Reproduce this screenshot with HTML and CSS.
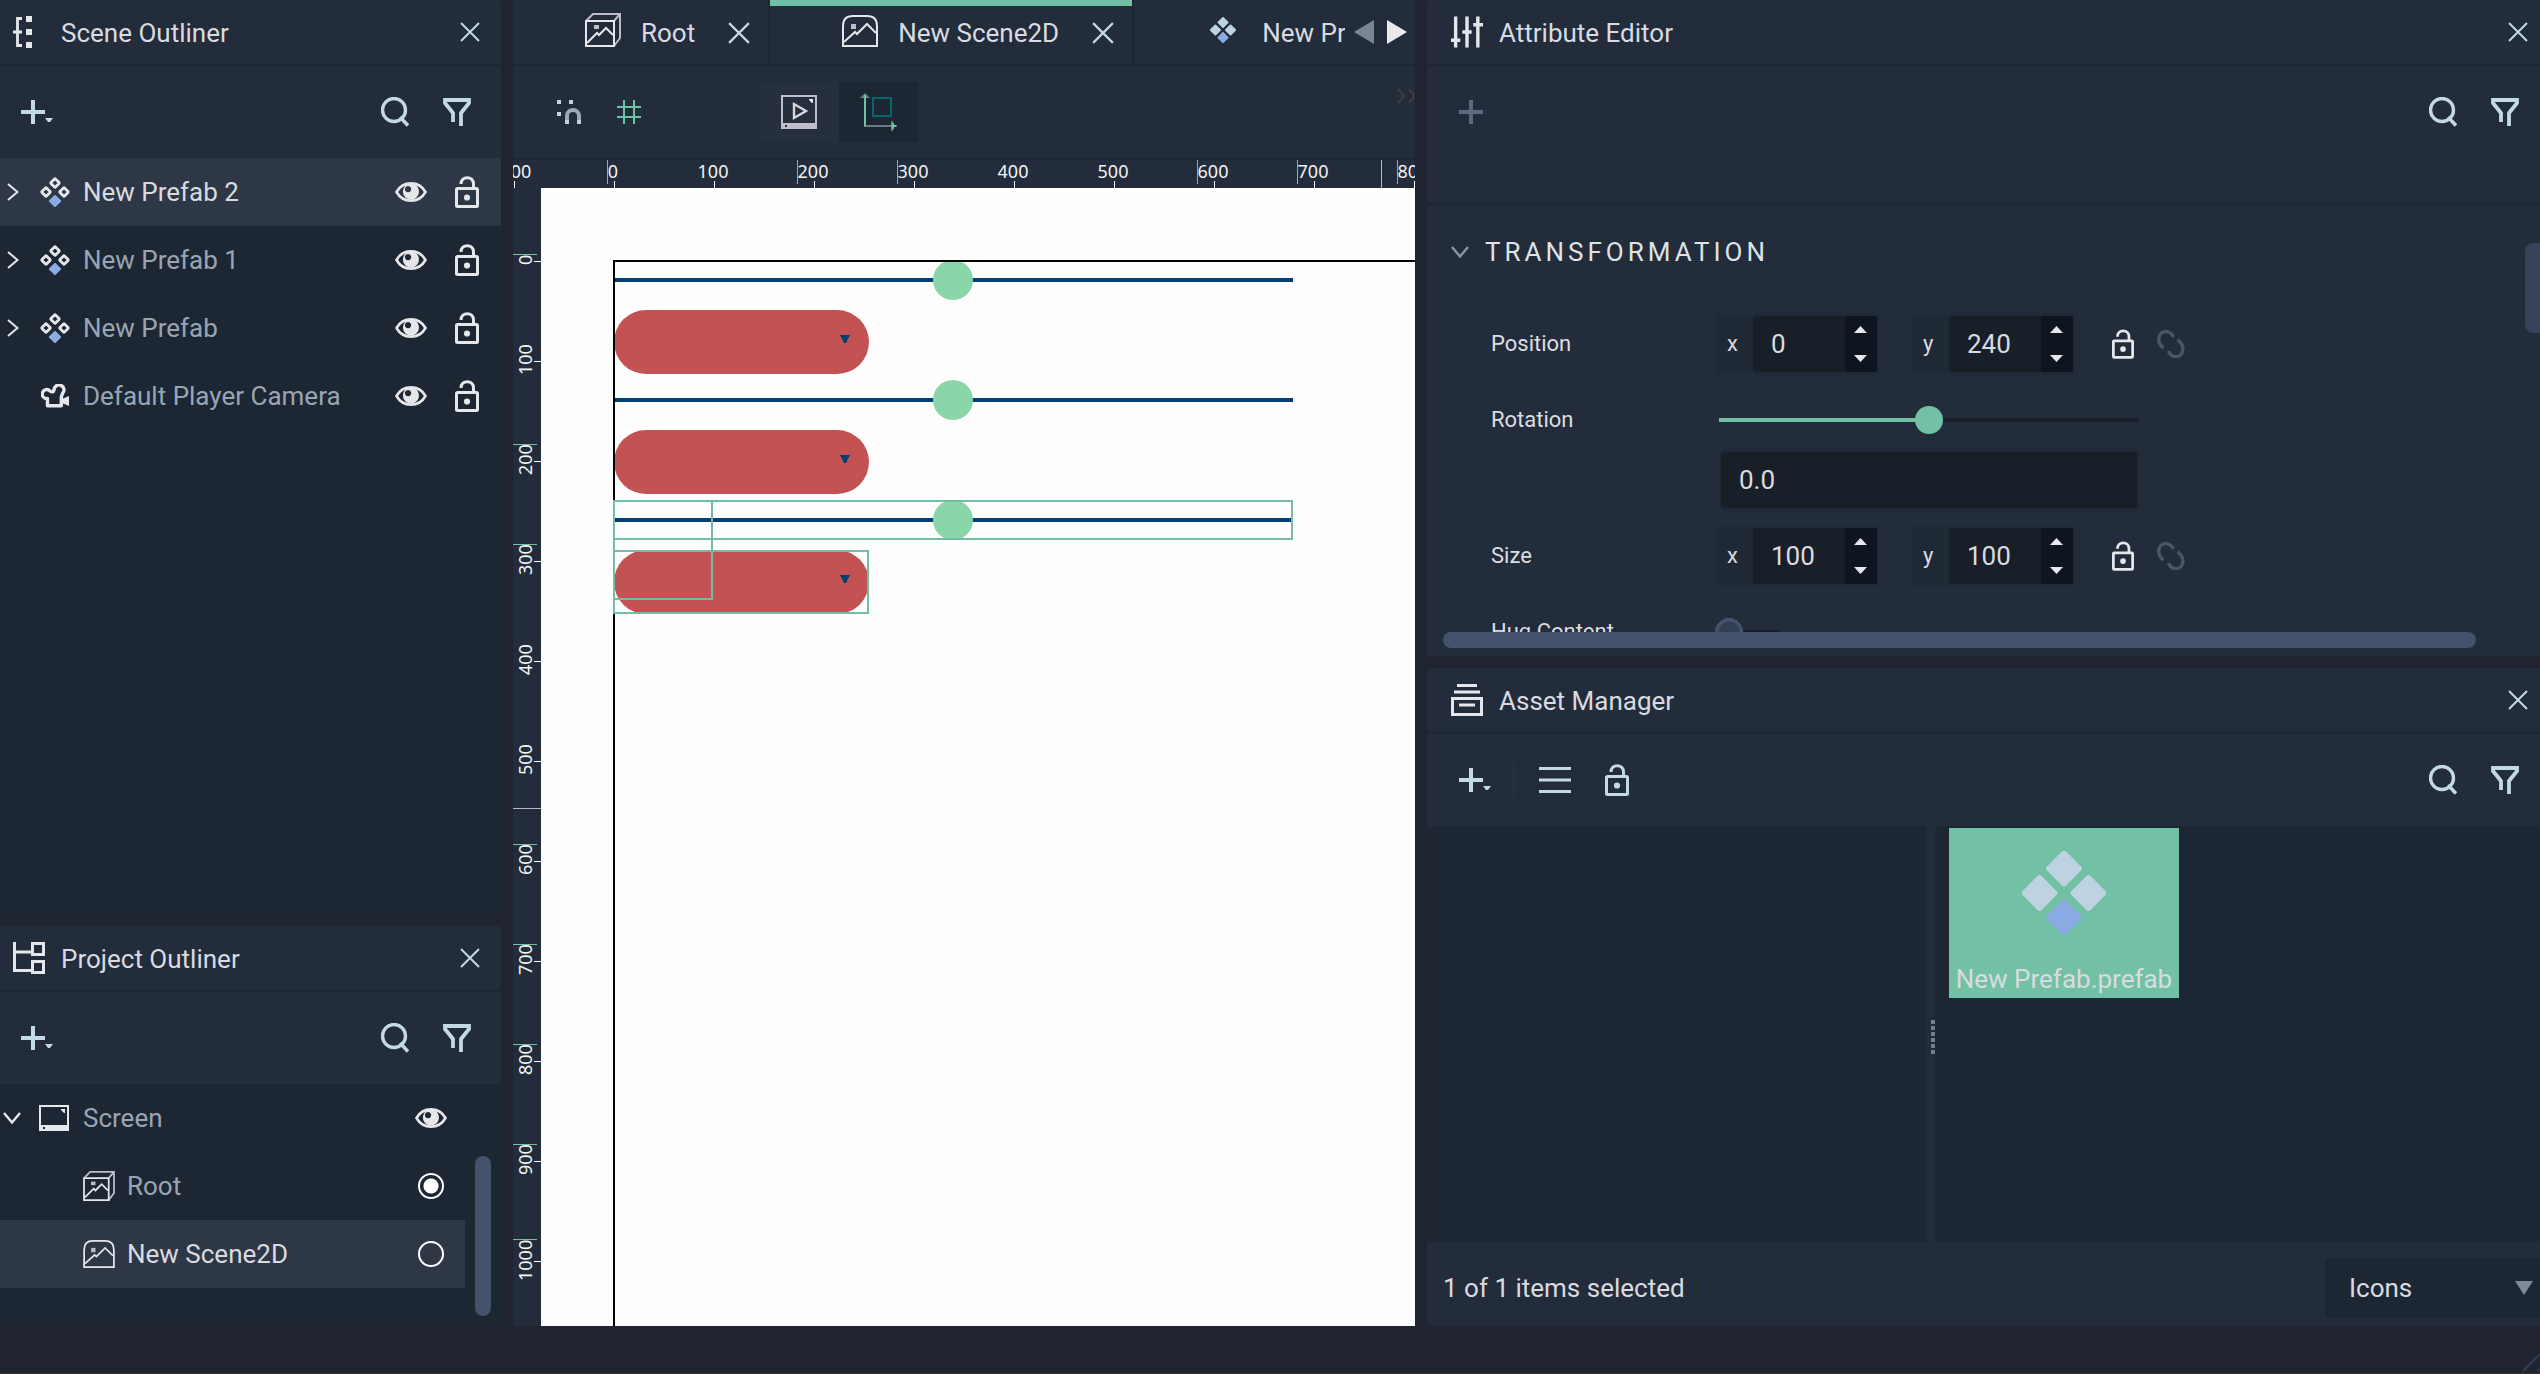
FILE: index.html
```html
<!DOCTYPE html>
<html lang="en">
<head>
<meta charset="utf-8">
<title>New Scene2D</title>
<meta name="viewport" content="width=device-width, initial-scale=1">
<link rel="stylesheet" href="styles.css">
</head>
<body>
<svg class="sprite" aria-hidden="true">
  <symbol id="close" viewBox="0 0 20 20"><path d="M1 1L19 19M19 1L1 19" fill="none" stroke="currentColor" stroke-width="2"/></symbol>
  <symbol id="plus" viewBox="0 0 24 24"><path d="M12 0V24M0 12H24" fill="none" stroke="currentColor" stroke-width="4"/></symbol>
  <symbol id="plus-menu" viewBox="0 0 32 24"><path d="M12 0V24M0 12H24" fill="none" stroke="currentColor" stroke-width="4"/><path d="M24 18H32L29 22H27Z" fill="currentColor"/></symbol>
  <symbol id="search" viewBox="0 0 28 30"><circle cx="13" cy="13" r="11.500" fill="none" stroke="currentColor" stroke-width="3.400"/><path d="M19 20L27 28.500" fill="none" stroke="currentColor" stroke-width="3.500"/></symbol>
  <symbol id="filter" viewBox="0 0 28 28"><path d="M10 24V15L2 5V2H26V5L18 15V28" fill="none" stroke="currentColor" stroke-width="3.800"/></symbol>
  <symbol id="chevron-right" viewBox="0 0 12 18"><path d="M1 1L10.500 9L1 17" fill="none" stroke="currentColor" stroke-width="2"/></symbol>
  <symbol id="chevron-down" viewBox="0 0 18 12"><path d="M1 1L9 10.500L17 1" fill="none" stroke="currentColor" stroke-width="2.400"/></symbol>
  <symbol id="prefab" viewBox="0 0 30 30">
    <g fill="none" stroke="currentColor" stroke-width="2.800"><rect x="-3.200" y="-3.200" width="6.400" height="6.400" rx="1" transform="translate(15 6) rotate(45)"/><rect x="-3.200" y="-3.200" width="6.400" height="6.400" rx="1" transform="translate(6 15) rotate(45)"/><rect x="-3.200" y="-3.200" width="6.400" height="6.400" rx="1" transform="translate(24 15) rotate(45)"/></g>
    <rect x="-4.600" y="-4.600" width="9.200" height="9.200" rx="1" transform="translate(15 24) rotate(45)" fill="#8aabe4"/>
  </symbol>
  <symbol id="prefab-solid" viewBox="0 0 84 84">
    <g fill="#bed3e1"><rect x="-13.500" y="-13.500" width="27" height="27" rx="3" transform="translate(42 17.500) rotate(45)"/><rect x="-13.500" y="-13.500" width="27" height="27" rx="3" transform="translate(17.500 42) rotate(45)"/><rect x="-13.500" y="-13.500" width="27" height="27" rx="3" transform="translate(66.500 42) rotate(45)"/></g>
    <rect x="-13.500" y="-13.500" width="27" height="27" rx="3" transform="translate(42 66.500) rotate(45)" fill="#8aabe4"/>
  </symbol>
  <symbol id="camera" viewBox="0 0 28 24"><path d="M6.500 21.800V14.500A4.500 4.500 0 1 1 9 7C11 8.500 12.500 8 13 6A5 5 0 1 1 21.500 9.500L20.300 13V21.800Z" fill="none" stroke="currentColor" stroke-width="3.400" stroke-linejoin="round"/><path d="M21 15L28 12V22L21 19Z" fill="currentColor"/></symbol>
  <symbol id="eye" viewBox="0 0 32 20"><path d="M1.500 10C8 -1.500 24 -1.500 30.500 10C24 21.500 8 21.500 1.500 10Z" fill="none" stroke="currentColor" stroke-width="2.600"/><path fill-rule="evenodd" d="M16 1.500A8 8 0 1 1 15.900 1.500ZM13 4A3.100 3.100 0 1 0 13.100 4Z" fill="currentColor"/></symbol>
  <symbol id="lock" viewBox="0 0 24 32"><rect x="1.500" y="12.500" width="21" height="18" rx="1" fill="none" stroke="currentColor" stroke-width="3"/><path d="M6 8C6 -.5 18.500 -.5 18.500 8V12" fill="none" stroke="currentColor" stroke-width="3"/><circle cx="12" cy="21.500" r="3.100" fill="currentColor"/></symbol>
  <symbol id="link" viewBox="0 0 27 28"><path d="M6 18C0 14 0 6 4 3C8 0 14 2 16 7M11 21C13 27 19 28 23 25C27 21 26 14 20 10" fill="none" stroke="currentColor" stroke-width="3.400"/></symbol>
  <symbol id="scene-outliner" viewBox="0 0 19 32"><path d="M9 2.500H4.500V29.500H9M0 16H9" fill="none" stroke="currentColor" stroke-width="2.800"/><path d="M13 0h6v6h-6zM13 13h6v6h-6zM13 26h6v6h-6z" fill="currentColor"/></symbol>
  <symbol id="project-outliner" viewBox="0 0 32 32"><path d="M1.500 0V28.500H18M1.500 10H18M19.500 1.500H30.500V12.500H19.500ZM19.500 19.500H30.500V30.500H19.500Z" fill="none" stroke="currentColor" stroke-width="3"/></symbol>
  <symbol id="root" viewBox="0 0 36 34"><path d="M1 8L8 1H35V25L29 33M29 8L35 1" fill="none" stroke="#bfbccb" stroke-width="2"/><path d="M1 8H29V33H1ZM2 30L12 20L14 22L21 15L28 22" fill="none" stroke="currentColor" stroke-width="2"/><path d="M9 12h5v4h-5z" fill="#bfbccb"/></symbol>
  <symbol id="scene2d" viewBox="0 0 36 32"><path d="M1 31V11Q1 1 11 1H25Q35 1 35 11V31ZM2 27L13 17L15 19L25 9L34 18" fill="none" stroke="currentColor" stroke-width="2"/><path d="M9 9h5v5h-5z" fill="#bfbccb"/></symbol>
  <symbol id="screen" viewBox="0 0 30 26"><path fill-rule="evenodd" d="M0 0H30V26H0ZM2 2V20H28V2ZM4 22V24H6V22Z" fill="currentColor"/><path d="M22 4H26V8H25L22 5Z" fill="currentColor"/></symbol>
  <symbol id="sliders" viewBox="0 0 31 30"><path d="M4.500 0V30M15.500 0V30M26 0V30M0 23H9M11 15H20M21.500 8H31" fill="none" stroke="currentColor" stroke-width="3.300"/></symbol>
  <symbol id="assets" viewBox="0 0 32 32"><path d="M6 1.500H26M3 8H29M8 21H24M1.500 14.500H30.500V30.500H1.500Z" fill="none" stroke="currentColor" stroke-width="3"/></symbol>
</svg>

<div class="app">
  <main class="workspace">
    <div class="column">
      <section class="panel grow">
        <header class="panel-head"><svg class="head-icon thin"><use href="#scene-outliner"/></svg><h2>Scene Outliner</h2><button class="close" aria-label="Close"><svg><use href="#close"/></svg></button></header>
        <div class="toolbar"><button aria-label="Add"><svg class="i-add"><use href="#plus-menu"/></svg></button><span class="fill"></span><button aria-label="Search"><svg class="i-search"><use href="#search"/></svg></button><button aria-label="Filter"><svg class="i-filter"><use href="#filter"/></svg></button></div>
        <ul class="tree">
          <li class="selected"><svg class="i-chev"><use href="#chevron-right"/></svg><svg class="i-prefab"><use href="#prefab"/></svg><span>New Prefab 2</span><button aria-label="Visibility"><svg class="i-eye"><use href="#eye"/></svg></button><button aria-label="Lock"><svg class="i-lock"><use href="#lock"/></svg></button></li>
          <li><svg class="i-chev"><use href="#chevron-right"/></svg><svg class="i-prefab"><use href="#prefab"/></svg><span>New Prefab 1</span><button aria-label="Visibility"><svg class="i-eye"><use href="#eye"/></svg></button><button aria-label="Lock"><svg class="i-lock"><use href="#lock"/></svg></button></li>
          <li><svg class="i-chev"><use href="#chevron-right"/></svg><svg class="i-prefab"><use href="#prefab"/></svg><span>New Prefab</span><button aria-label="Visibility"><svg class="i-eye"><use href="#eye"/></svg></button><button aria-label="Lock"><svg class="i-lock"><use href="#lock"/></svg></button></li>
          <li><i></i><svg class="i-camera"><use href="#camera"/></svg><span>Default Player Camera</span><button aria-label="Visibility"><svg class="i-eye"><use href="#eye"/></svg></button><button aria-label="Lock"><svg class="i-lock"><use href="#lock"/></svg></button></li>
        </ul>
      </section>
      <section class="panel">
        <header class="panel-head"><svg class="head-icon"><use href="#project-outliner"/></svg><h2>Project Outliner</h2><button class="close" aria-label="Close"><svg><use href="#close"/></svg></button></header>
        <div class="toolbar"><button aria-label="Add"><svg class="i-add"><use href="#plus-menu"/></svg></button><span class="fill"></span><button aria-label="Search"><svg class="i-search"><use href="#search"/></svg></button><button aria-label="Filter"><svg class="i-filter"><use href="#filter"/></svg></button></div>
        <div class="project-body">
          <ul class="tree project">
            <li><svg class="i-chev-down"><use href="#chevron-down"/></svg><svg class="i-screen"><use href="#screen"/></svg><span>Screen</span><button aria-label="Visibility"><svg class="i-eye"><use href="#eye"/></svg></button></li>
            <li class="child"><svg class="i-root"><use href="#root"/></svg><label for="scene-root">Root</label><input type="radio" name="scene" id="scene-root" checked></li>
            <li class="child selected"><svg class="i-scene"><use href="#scene2d"/></svg><label for="scene-2d">New Scene2D</label><input type="radio" name="scene" id="scene-2d"></li>
          </ul>
          <div class="scroll-thumb"></div>
        </div>
      </section>
    </div>

    <section class="center">
      <nav class="tabs">
        <div class="tab"><svg class="t-root"><use href="#root"/></svg><span>Root</span><button aria-label="Close"><svg><use href="#close"/></svg></button></div>
        <div class="tab active"><svg class="t-scene"><use href="#scene2d"/></svg><span>New Scene2D</span><button aria-label="Close"><svg><use href="#close"/></svg></button></div>
        <div class="tab last"><svg class="t-prefab"><use href="#prefab-solid"/></svg><span>New Prefab</span></div>
        <div class="tab-scroll"><button aria-label="Previous tabs" class="prev"><svg viewBox="0 0 20 24"><path d="M20 0V24L0 12Z" fill="currentColor"/></svg></button><button aria-label="Next tabs"><svg viewBox="0 0 20 24"><path d="M0 0V24L20 12Z" fill="currentColor"/></svg></button></div>
      </nav>
      <div class="view-tools">
        <button aria-label="Snapping"><svg width="24" height="24" viewBox="0 0 24 24"><path d="M0 0h4v4h-4zM12 0h4v4h-4zM0 12h4v4h-4z" fill="#c0d4e2"/><path d="M10 24V16A6 6 0 0 1 22 16V24" fill="none" stroke="#9aa8b8" stroke-width="4"/><path d="M8 20h4v4h-4zM20 20h4v4h-4z" fill="#bed2e0"/></svg></button>
        <button aria-label="Grid"><svg width="24" height="24" viewBox="0 0 24 24"><path d="M7 0V24M17 0V24M0 7H24M0 17H24" stroke="#6fc4a4" stroke-width="2" fill="none"/></svg></button>
        <div class="modes">
          <button aria-label="Preview"><svg width="36" height="34" viewBox="0 0 36 34"><path fill-rule="evenodd" d="M0 0H36V34H0ZM2 2V28H34V2ZM4 30V32H6V30Z" fill="#bfbccb"/><path d="M28 4H32V8H31L28 5Z" fill="#e8e8ec"/><path d="M13 9V23L25 16Z" fill="none" stroke="#d8d7de" stroke-width="2.400"/></svg></button>
          <button aria-label="Edit layout" class="on"><svg width="38" height="38" viewBox="0 0 38 38"><path d="M4 33H37M32 28V38" stroke="#6c7a86" stroke-width="2" fill="none"/><path d="M0 5H10L5 0Z" fill="#5f8580"/><path d="M5 2V33M36 33H31M33 30V36" stroke="#6fc4a4" stroke-width="2" fill="none"/><path d="M13 5H31V23H13Z" stroke="#07666c" stroke-width="2" fill="none"/></svg></button>
        </div>
        <span class="fill"></span>
        <svg class="more" width="18" height="16" viewBox="0 0 18 16"><path d="M1 1L7 8L1 15M12 1L18 8L12 15" fill="none" stroke="#453d40" stroke-width="2"/></svg>
      </div>
      <div class="ruler-x">
        <div class="marks"><span>-100</span><span>0</span><span>100</span><span>200</span><span>300</span><span>400</span><span>500</span><span>600</span><span>700</span><span>800</span></div>
        <i class="guide" style="left:94px"></i><i class="guide" style="left:284px"></i><i class="guide" style="left:384px"></i><i class="guide" style="left:684px"></i><i class="guide" style="left:784px"></i><i class="guide pointer" style="left:868px"></i><i class="guide" style="left:884px"></i>
      </div>
      <div class="stage">
        <div class="ruler-y">
          <div class="marks"><span>0</span><span>100</span><span>200</span><span>300</span><span>400</span><span>500</span><span>600</span><span>700</span><span>800</span><span>900</span><span>1000</span></div>
          <i class="guide" style="top:66px"></i><i class="guide" style="top:256px"></i><i class="guide" style="top:356px"></i><i class="guide pointer" style="top:620px"></i><i class="guide" style="top:656px"></i><i class="guide" style="top:756px"></i><i class="guide" style="top:856px"></i><i class="guide" style="top:956px"></i><i class="guide" style="top:1051px"></i>
        </div>
        <div class="viewport">
          <svg class="canvas" role="img" aria-label="Scene canvas">
            <defs><g id="widget"><rect x="74" y="90" width="678" height="4" fill="#013e74"/><circle cx="412" cy="92" r="20" fill="#8bd6a8"/><rect x="73" y="122" width="255" height="64" rx="32" fill="#c35353"/><path d="M299 147H309L305 155H303Z" fill="#013e74"/></g></defs>
            <use href="#widget"/><use href="#widget" y="120"/><use href="#widget" y="240"/>
            <path d="M72 72H2000M73 72V4000" transform="translate(0 1)" stroke="#000" stroke-width="2"/>
            <g fill="none" stroke="#70bfa4" stroke-width="2"><rect x="73" y="313" width="678" height="38"/><rect x="73" y="313" width="98" height="98"/><rect x="73" y="363" width="254" height="62"/></g>
          </svg>
        </div>
      </div>
    </section>

    <div class="column">
      <section class="panel wide attributes">
        <header class="panel-head"><svg class="head-icon"><use href="#sliders"/></svg><h2>Attribute Editor</h2><button class="close" aria-label="Close"><svg><use href="#close"/></svg></button></header>
        <div class="toolbar tall"><button aria-label="Add" disabled><svg class="i-plus"><use href="#plus"/></svg></button><span class="fill"></span><button aria-label="Search"><svg class="i-search"><use href="#search"/></svg></button><button aria-label="Filter"><svg class="i-filter"><use href="#filter"/></svg></button></div>
        <div class="attr-body">
          <h3><svg class="i-chev-down"><use href="#chevron-down"/></svg>TRANSFORMATION</h3>
          <div class="field"><span class="name">Position</span>
            <div class="spin"><label for="pos-x">x</label><input id="pos-x" value="0"><div><button aria-label="Increase"></button><button aria-label="Decrease" class="down"></button></div></div>
            <div class="spin"><label for="pos-y">y</label><input id="pos-y" value="240"><div><button aria-label="Increase"></button><button aria-label="Decrease" class="down"></button></div></div>
            <button aria-label="Lock"><svg class="f-lock"><use href="#lock"/></svg></button><button aria-label="Link" class="dim"><svg class="f-link"><use href="#link"/></svg></button></div>
          <div class="field"><label class="name" for="rot-slider">Rotation</label><input class="slider" type="range" id="rot-slider" min="-180" max="180" value="0"></div>
          <div class="field"><span class="name"></span><input class="number" aria-label="Rotation value" value="0.0"></div>
          <div class="field"><span class="name">Size</span>
            <div class="spin"><label for="size-x">x</label><input id="size-x" value="100"><div><button aria-label="Increase"></button><button aria-label="Decrease" class="down"></button></div></div>
            <div class="spin"><label for="size-y">y</label><input id="size-y" value="100"><div><button aria-label="Increase"></button><button aria-label="Decrease" class="down"></button></div></div>
            <button aria-label="Lock"><svg class="f-lock"><use href="#lock"/></svg></button><button aria-label="Link" class="dim"><svg class="f-link"><use href="#link"/></svg></button></div>
          <div class="field"><label class="name" for="hug">Hug Content</label><input type="checkbox" class="toggle" id="hug"></div>
          <div class="scroll-y"></div>
          <div class="h-scroll"><div class="scroll-x"></div></div>
        </div>
      </section>
      <section class="panel wide assets">
        <header class="panel-head"><svg class="head-icon"><use href="#assets"/></svg><h2>Asset Manager</h2><button class="close" aria-label="Close"><svg><use href="#close"/></svg></button></header>
        <div class="toolbar"><button aria-label="Add"><svg class="i-add"><use href="#plus-menu"/></svg></button><i class="sep"></i><button aria-label="List" class="list"><svg width="32" height="26" viewBox="0 0 32 26"><path d="M0 1.500H32M0 13H32M0 24.500H32" stroke="currentColor" stroke-width="3"/></svg></button><button aria-label="Lock"><svg class="i-lock"><use href="#lock"/></svg></button><span class="fill"></span><button aria-label="Search"><svg class="i-search"><use href="#search"/></svg></button><button aria-label="Filter"><svg class="i-filter"><use href="#filter"/></svg></button></div>
        <div class="asset-body">
          <div class="folders"></div>
          <div class="splitter"><svg width="4" height="34" viewBox="0 0 4 34"><path d="M0 0h4v4h-4zM0 6h4v4h-4zM0 12h4v4h-4zM0 18h4v4h-4zM0 24h4v4h-4zM0 30h4v4h-4z" fill="#76808d"/></svg></div>
          <div class="files"><button class="file"><svg><use href="#prefab-solid"/></svg><span>New Prefab.prefab</span></button></div>
        </div>
        <footer class="asset-foot"><span>1 of 1 items selected</span><div class="picker"><select aria-label="View"><option>Icons</option><option>List</option></select><svg viewBox="0 0 18 14"><path d="M0 0H18L9 14Z" fill="#7f8995"/></svg></div></footer>
      </section>
    </div>
  </main>
  <footer class="status"><svg width="18" height="20" viewBox="0 0 18 20"><path d="M1 18L18 1M16 18L18 16" stroke="#333e54" stroke-width="2"/></svg></footer>
</div>
</body>
</html>
```
FILE: styles.css
```css
* { box-sizing: border-box; }

:root {
  --page: #1f2430;
  --panel: #222c3b;
  --sunken: #1d2733;
  --selected: #2d3746;
  --text: #d9dbe0;
  --muted: #99a5b5;
  --icon: #c3d9e8;
  --white: #e6e7eb;
  --green: #72c1a5;
  --bar: #44526b;
}

body {
  margin: 0;
  background: var(--page);
  color: var(--text);
  font: 26px/32px Roboto, sans-serif;
}

h2, h3, ul { margin: 0; padding: 0; font: inherit; list-style: none; }
svg { display: block; flex: none; }
.sprite { position: absolute; width: 0; height: 0; }
button { display: block; flex: none; margin: 0; padding: 0; border: 0; background: none; color: inherit; font: inherit; }
input, select { margin: 0; font: inherit; color: inherit; border: 0; border-radius: 0; outline: 0; }
.fill { flex: 1; }

.app { display: flex; flex-direction: column; height: 100vh; overflow: hidden; }
.workspace {
  flex: 1;
  min-height: 0;
  display: grid;
  grid-template-columns: 501px minmax(0, 902fr) minmax(0, 1113fr);
  grid-template-rows: minmax(0, 1fr);
  gap: 12px;
}
.column { display: flex; flex-direction: column; gap: 12px; min-height: 0; min-width: 0; }
.status { flex: none; height: 48px; display: flex; justify-content: flex-end; align-items: flex-end; border-bottom: 1px solid #3a2e34; }

/* Panels */
.panel { display: flex; flex-direction: column; background: var(--sunken); border-radius: 0 4px 4px 0; overflow: hidden; min-height: 0; }
.panel.grow { flex: 1; }
.panel.wide { border-radius: 4px 0 0 4px; }
.panel-head {
  flex: none;
  display: flex;
  align-items: center;
  height: 64px;
  margin-bottom: 2px;
  padding: 0 21px 0 13px;
  background: var(--panel);
  border-radius: 0 4px 4px 0;
}
.panel-head h2 { flex: 1; padding: 1px 0 0 16px; }
.head-icon { width: 32px; height: 32px; color: var(--white); }
.head-icon.thin { width: 19px; margin-right: 13px; }
.close { color: var(--icon); }
.close svg { width: 20px; height: 20px; }
.wide .panel-head { padding: 0 12px 0 24px; border-radius: 4px 0 0 4px; }

.toolbar {
  flex: none;
  display: flex;
  align-items: center;
  gap: 34px;
  height: 92px;
  padding: 0 30px 0 21px;
  background: var(--panel);
  color: var(--icon);
}
.toolbar button:disabled { color: #5b6a80; }
.wide .toolbar { padding: 0 21px 0 32px; }
.wide .toolbar.tall { height: 136px; padding-bottom: 44px; }
.toolbar .sep { width: 4px; height: 32px; margin-left: -14px; background: #253143; }
.toolbar .list { margin-left: -10px; }
.i-add { width: 32px; height: 24px; }
.i-plus { width: 24px; height: 24px; }
.i-search { width: 28px; height: 30px; }
.i-filter { width: 28px; height: 28px; }
.i-eye { width: 32px; height: 20px; }
.i-lock { width: 24px; height: 32px; }
.i-chev { width: 12px; height: 18px; }
.i-chev-down { width: 18px; height: 12px; }
.i-prefab { width: 30px; height: 30px; }
.i-camera { width: 28px; height: 24px; }
.i-screen { width: 30px; height: 26px; }
.i-root { width: 32px; height: 30px; }
.i-scene { width: 32px; height: 28px; }

/* Trees */
.tree li {
  display: grid;
  grid-template-columns: 12px 72px 1fr 60px 24px;
  align-items: center;
  justify-items: center;
  height: 68px;
  padding: 0 22px 0 7px;
  color: var(--white);
}
.tree li > span, .tree li > label { justify-self: start; color: var(--muted); }
.tree li > span { margin-left: -8px; }
.tree .i-eye { margin-right: 28px; }
.tree li.selected { background: var(--selected); }
.tree li.selected > span, .tree li.selected > label { color: var(--text); }

.project-body { display: flex; padding-bottom: 38px; position: relative; }
.tree.project { width: 465px; }
.tree.project li { grid-template-columns: 18px 66px 1fr 32px; padding: 0 18px 0 3px; }
.tree.project li > span { margin-left: -4px; }
.tree.project .i-eye { margin: 0; }
.tree.project li.child { grid-template-columns: 32px 1fr 32px; padding-left: 83px; }
.tree.project li > label { margin-left: 12px; }
.tree input {
  appearance: none;
  width: 26px;
  height: 26px;
  border: 2px solid #fff;
  border-radius: 50%;
}
.tree input:checked { background: radial-gradient(circle, #fff 7px, transparent 8px); }
.scroll-thumb { position: absolute; left: 475px; bottom: 10px; width: 16px; height: 160px; border-radius: 8px; background: var(--bar); }

/* Scene editor */
.center { display: flex; flex-direction: column; min-width: 0; min-height: 0; background: var(--panel); }
.tabs { flex: none; position: relative; display: flex; height: 66px; border-bottom: 2px solid var(--sunken); overflow: hidden; }
.tab {
  flex: none;
  display: flex;
  align-items: center;
  padding: 2px 18px 0 72px;
  border-right: 2px solid var(--sunken);
}
.tab span { margin: 0 33px 0 20px; }
.tab button { color: var(--icon); }
.tab button svg { width: 22px; height: 22px; }
.tab.active { box-shadow: inset 0 6px var(--green); }
.tab.last { border: 0; padding-left: 76px; }
.tab.last span { margin-left: 26px; }
.t-root { width: 36px; height: 34px; margin-top: -6px; color: var(--white); }
.t-scene { width: 36px; height: 32px; margin-top: -4px; color: var(--white); }
.t-prefab { width: 26px; height: 26px; margin-top: -6px; }
.tab-scroll {
  position: absolute;
  inset: 0 0 0 auto;
  display: flex;
  align-items: center;
  gap: 13px;
  padding: 0 8px 0 9px;
  background: var(--panel);
  color: #e9e9ec;
}
.tab-scroll .prev { color: #7b8492; }
.tab-scroll svg { width: 20px; height: 24px; }

.view-tools { flex: none; display: flex; align-items: center; height: 94px; padding-left: 44px; border-bottom: 2px solid var(--sunken); }
.view-tools > button + button { margin-left: 36px; }
.modes { display: flex; margin-left: 118px; border-radius: 6px; background: #252f3e; }
.modes button { width: 80px; height: 60px; display: grid; place-items: center; }
.modes .on { background: var(--sunken); }
.more { align-self: flex-start; margin-top: 22px; }

.marks { display: flex; color: #f2f3f5; font: 18px/24px "Noto Sans", sans-serif; }
.marks span { flex: none; position: relative; }
.ruler-x, .ruler-y { position: relative; overflow: hidden; flex: none; }
.ruler-x { height: 28px; }
.ruler-x .marks { margin-left: -50px; }
.ruler-x span { width: 100px; height: 28px; text-align: center; line-height: 22px; }
.ruler-x span::after { content: ""; position: absolute; left: 51px; bottom: 0; width: 1px; height: 7px; background: #fff; }
.ruler-y { width: 28px; }
.ruler-y .marks { flex-direction: column; padding-top: 22px; }
.ruler-y span { writing-mode: vertical-rl; rotate: 180deg; width: 28px; height: 100px; padding-left: 4px; text-align: center; }
.ruler-y span::after { content: ""; position: absolute; left: 0; top: 48px; width: 7px; height: 1px; background: #fff; }
.guide { position: absolute; background: var(--green); }
.ruler-x .guide { top: 0; width: 1px; height: 24px; }
.ruler-y .guide { left: 0; width: 24px; height: 1px; }
.ruler-x .pointer { height: 28px; background: #b9b8c6; }
.ruler-y .pointer { width: 28px; background: #b9b8c6; }
.stage { flex: 1; display: flex; min-height: 0; overflow: hidden; }
.viewport { flex: 1; min-width: 0; background: #fefefe; }
.canvas { width: 100%; height: 100%; }

/* Attribute editor */
.attributes { flex: 656 0 0; }
.attr-body { position: relative; flex: 1; min-height: 0; overflow: hidden; margin-top: 4px; background: var(--panel); padding: 30px 0 0 24px; }
.attr-body h3 { display: flex; align-items: center; gap: 16px; height: 32px; margin-bottom: 46px; letter-spacing: 4px; color: #dfe3e4; }
.attr-body h3 svg { color: #8a95a2; }
.field { display: flex; align-items: center; height: 60px; margin-bottom: 16px; padding-left: 40px; }
.field:has(.slider) { margin-bottom: 0; }
.name { flex: none; width: 224px; font-size: 22px; color: #dcdee2; }
.spin { display: flex; width: 164px; height: 60px; margin-right: 32px; border: 2px solid #1f2835; background: #1f2835; }
.spin label { width: 36px; padding-left: 10px; line-height: 56px; font-size: 22px; }
.spin label + input { width: 92px; height: 56px; padding: 0 0 0 18px; background: #191f28; }
.spin div { width: 32px; background: #0f1421; display: flex; flex-direction: column; justify-content: space-between; padding: 10px 10px 10px 9px; }
.spin button { width: 13px; height: 7px; background: var(--white); clip-path: polygon(50% 0, 100% 100%, 0 100%); }
.spin .down { clip-path: polygon(0 0, 100% 0, 50% 100%); }
.field > button { margin-left: 5px; color: var(--white); }
.field > button.dim { margin-left: 23px; color: #4b5664; }
.f-lock { width: 22px; height: 30px; }
.f-link { width: 28px; height: 28px; }
.slider { appearance: none; width: 420px; height: 28px; margin-left: 4px; background: linear-gradient(90deg, var(--green) 50%, #191f28 50%) center / 100% 4px no-repeat; }
.slider::-webkit-slider-thumb { appearance: none; width: 28px; height: 28px; border-radius: 50%; background: var(--green); }
.number { width: 420px; height: 60px; margin-left: 4px; padding: 0 0 0 18px; border: 2px solid #1f2835; background: #191f28; }
.toggle { appearance: none; width: 64px; height: 28px; background: radial-gradient(circle at 14px 14px, #334054 10px, var(--bar) 11px 14px, transparent 14px) no-repeat, linear-gradient(#191f28, #191f28) right center / 50px 4px no-repeat; }
.scroll-y { position: absolute; top: 37px; right: 0; width: 15px; height: 90px; border-radius: 8px 0 0 8px; background: #38435b; }
.h-scroll { position: absolute; inset: auto 0 0; height: 24px; padding: 0 64px 0 16px; background: var(--panel); }
.scroll-x { height: 16px; border-radius: 8px; background: var(--bar); }

/* Asset manager */
.assets { flex: 658 0 0; }
.asset-body { flex: 1; display: grid; grid-template-columns: minmax(0, 500fr) 8px minmax(0, 605fr); min-height: 0; background: var(--panel); }
.folders { border-radius: 4px; background: var(--sunken); }
.splitter { display: flex; justify-content: flex-end; align-items: center; padding-top: 6px; }
.files { padding: 2px 14px; border-radius: 4px; background: var(--sunken); }
.file { width: 230px; height: 170px; padding-top: 23px; display: flex; flex-direction: column; align-items: center; background: var(--green); white-space: nowrap; }
.file svg { width: 84px; height: 84px; }
.file span { margin-top: 28px; }
.asset-foot { flex: none; display: flex; align-items: center; justify-content: space-between; height: 84px; padding-left: 16px; background: var(--panel); }
.asset-foot > span { margin-top: 8px; }
.picker { position: relative; width: 215px; margin-top: 8px; }
.picker select { appearance: none; width: 100%; height: 60px; padding: 0 24px; border-radius: 4px 0 0 4px; background: var(--sunken); }
.picker svg { position: absolute; right: 7px; top: 23px; width: 18px; height: 14px; pointer-events: none; }
```
